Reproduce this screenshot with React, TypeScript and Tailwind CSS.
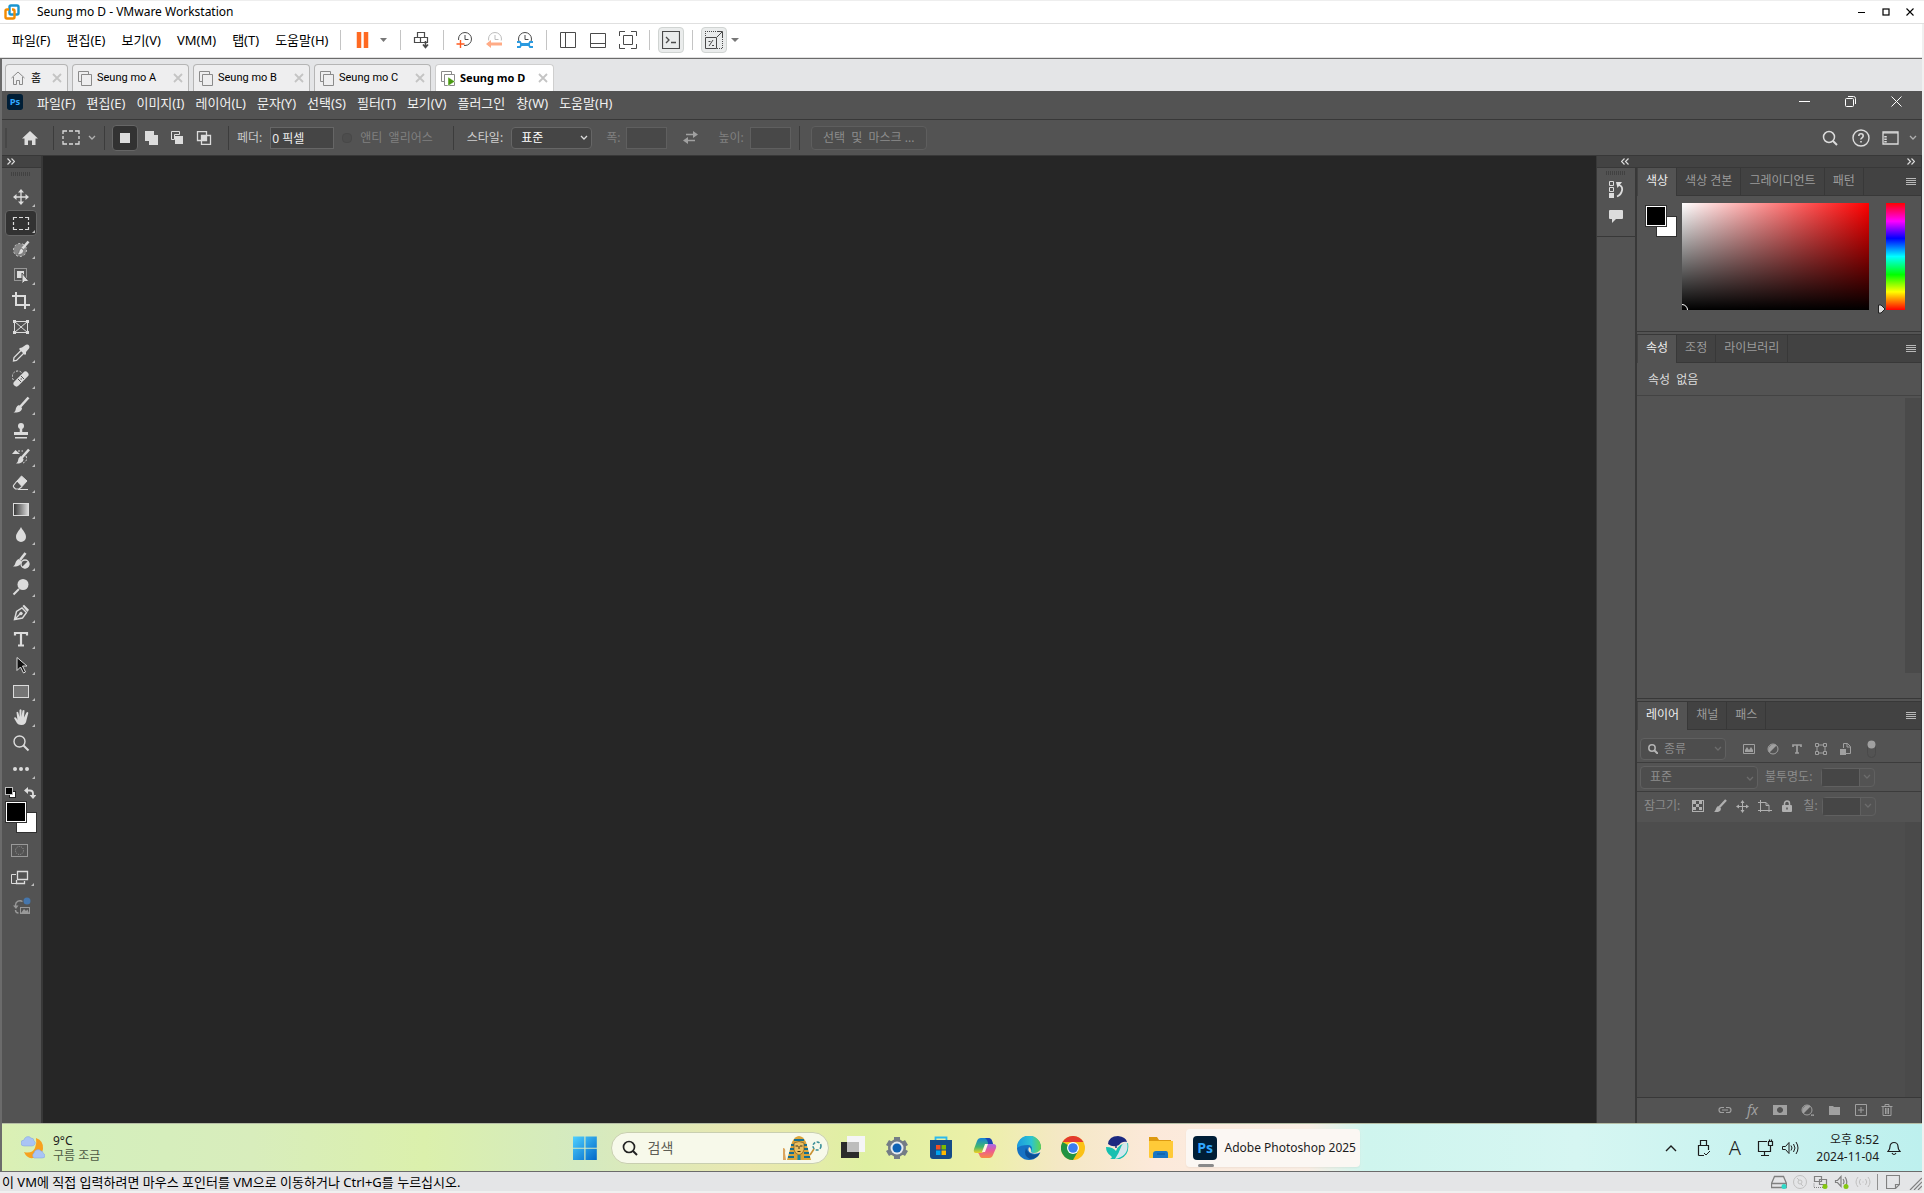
import React, { ReactNode } from 'react';

interface IconProps {
  w?: number;
  h?: number;
  className?: string;
  children: ReactNode;
}

// Stroke based icon, one unit is one pixel
function Icon({ w = 20, h = 20, className = '', children }: IconProps) {
  return (
    <svg
      width={w}
      height={h}
      viewBox={`0 0 ${w} ${h}`}
      fill="none"
      stroke="currentColor"
      aria-hidden="true"
      className={`shrink-0 ${className}`}
    >
      {children}
    </svg>
  );
}

const hostMenus = ['파일(F)', '편집(E)', '보기(V)', 'VM(M)', '탭(T)', '도움말(H)'];

const vmTabs = [
  { name: 'Seung mo A', active: false },
  { name: 'Seung mo B', active: false },
  { name: 'Seung mo C', active: false },
  { name: 'Seung mo D', active: true }
];

const psMenus = [
  '파일(F)', '편집(E)', '이미지(I)', '레이어(L)', '문자(Y)', '선택(S)',
  '필터(T)', '보기(V)', '플러그인', '창(W)', '도움말(H)'
];

function Chevron({ className = '' }: { className?: string }) {
  return (
    <Icon w={8} h={6} className={className}>
      <path d="M1 1l3 3 3-3" strokeWidth="1.3" />
    </Icon>
  );
}

function Divider() {
  return <span className="h-5 w-px shrink-0 bg-[#c4c4c4]" />;
}

function TitleBar() {
  return (
    <header className="flex h-6 items-center border-t border-b border-t-[#eeeeee] border-b-[#e0e0e0] bg-white pr-[10px] pl-1 text-black">
      <Icon w={16} h={16}>
        <rect x="5.5" y="1.5" width="9" height="9" rx="1.5" stroke="#1b95cf" strokeWidth="2.4" />
        <path d="M5 5.5H3Q1.500 5.500 1.500 7v6q0 1.500 1.500 1.500h6q1.500 0 1.500-1.500V7Q10.500 5.500 9 5.500H8" stroke="#f38b00" strokeWidth="2.4" />
      </Icon>
      <h1 className="ml-[17px] flex-1 text-xs leading-4">Seung mo D - VMware Workstation</h1>
      <div className="flex items-center gap-4">
        <button aria-label="최소화">
          <Icon w={8} h={8}><path d="M0 4.500h7" /></Icon>
        </button>
        <button aria-label="최대화">
          <Icon w={8} h={8}><rect x="1" y="1" width="6" height="6" strokeWidth="1.2" /></Icon>
        </button>
        <button aria-label="닫기">
          <Icon w={8} h={8}><path d="M.5.5l7 7M7.500.5l-7 7" strokeWidth="1.1" /></Icon>
        </button>
      </div>
    </header>
  );
}

function Clock({ color, children }: { color: string; children: ReactNode }) {
  return (
    <Icon w={18} h={18}>
      <circle cx="9" cy="8" r="6.500" stroke={color} />
      <path d="M9 4v4.500h3.500" stroke={color} />
      {children}
    </Icon>
  );
}

function HostToolbar() {
  return (
    <div className="flex h-[34px] items-center border-b border-[#e0e0e0] bg-white pb-0.5 pl-3 text-[#4a4a4a]">
      <nav className="flex gap-4 text-[13px] leading-4 text-black">
        {hostMenus.map((m) => (
          <button key={m} className="whitespace-nowrap">{m}</button>
        ))}
      </nav>
      <div className="ml-3 flex items-center">
        <Divider />
        <button aria-label="일시 중지" className="ml-[15px]">
          <Icon w={14} h={18}><path d="M3 1v16M10 1v16" stroke="#ff6a22" strokeWidth="4.500" /></Icon>
        </button>
        <button aria-label="전원 옵션" className="mr-3 ml-2.5">
          <Icon w={8} h={6}><path d="M0 1h7L3.500 5z" fill="#777" stroke="none" /></Icon>
        </button>
        <Divider />
        <button aria-label="Ctrl+Alt+Del" className="mr-3 ml-3">
          <Icon w={18} h={18}>
            <path d="M4.500 1.500h7v5h-7zM1.500 6.500h13v5h-13zM7.500 6.500v5" strokeWidth="1.2" />
            <path d="M12.500 10v6M10 13.500l2.500 3 2.500-3" strokeWidth="1.600" />
          </Icon>
        </button>
        <Divider />
        <div className="mr-3 ml-3 flex gap-3">
          <button aria-label="스냅샷 만들기">
            <Clock color="#4a4a4a">
              <path d="M0 9h8v9H0z" fill="#fff" stroke="none" />
              <path d="M4.500 9v8M.5 13h8" stroke="#ff5a1f" strokeWidth="1.400" />
            </Clock>
          </button>
          <button aria-label="스냅샷 되돌리기">
            <Clock color="#bdbdbd">
              <path d="M0 9.500h18v9H0z" fill="#fff" stroke="none" />
              <path d="M2 13h14" stroke="#ffab86" strokeWidth="3" />
              <path d="M5 9v8L0 13z" fill="#ffab86" stroke="none" />
            </Clock>
          </button>
          <button aria-label="스냅샷 관리">
            <Clock color="#4a4a4a">
              <path d="M0 10.500h18v9H0z" fill="#fff" stroke="none" />
              <path d="M4 13.500h10" stroke="#2a9ae0" strokeWidth="3" />
              <path d="M1 11h3l1.500 2.500L4 16H1M17 11h-3l-1.500 2.500L14 16h3" stroke="#2a9ae0" strokeWidth="1.800" />
            </Clock>
          </button>
        </div>
        <Divider />
        <div className="mr-3 ml-3 flex gap-3">
          <button aria-label="라이브러리">
            <Icon w={18} h={18}><path d="M1.500 1.500h15v15h-15zM6.500 1.500v15" /></Icon>
          </button>
          <button aria-label="축소판 표시줄">
            <Icon w={18} h={18}><path d="M1.500 2.500h15v14h-15zM1.500 12.500h15" /></Icon>
          </button>
          <button aria-label="전체 화면">
            <Icon w={18} h={18}>
              <path d="M.5 5V.5H6M12 .5h5.500V5M17.500 13v4.500H12M6 17.500H.5V13M4.500 4.500h9v9h-9z" />
            </Icon>
          </button>
        </div>
        <Divider />
        <button aria-label="콘솔" className="mx-2 rounded border border-[#d0d4d2] bg-[#eaecec] p-[3px]">
          <Icon w={18} h={18}>
            <path d="M.5.500h17v17H.5z" strokeWidth="1.200" />
            <path d="M4 6l3 3-3 3M9 11.500h5" strokeWidth="1.300" />
          </Icon>
        </button>
        <Divider />
        <button aria-label="늘이기" className="mr-1 ml-2 rounded border border-[#d0d4d2] bg-[#eaecec] p-[3px]">
          <Icon w={18} h={18}>
            <path d="M.5 6.500h11v11H.5zM12 6l5-5M12 .5h5.500V6" />
            <path d="M0 .5h12M17.500 6v12M12 17.500h6M.5 0v6" strokeDasharray="1 1" />
            <path d="M4 15l4-6M3.500 10.500h2M7 14.500h2" />
          </Icon>
        </button>
        <button aria-label="늘이기 옵션">
          <Icon w={8} h={6}><path d="M0 1h8L4 5z" fill="#777" stroke="none" /></Icon>
        </button>
      </div>
    </div>
  );
}

function TabClose() {
  return (
    <button aria-label="탭 닫기" className="text-[#c4c4c4]">
      <Icon w={10} h={10}><path d="M1 1l8 8M9 1L1 9" strokeWidth="1.800" /></Icon>
    </button>
  );
}

function VmTabs() {
  return (
    <div className="flex h-8 items-end gap-1 bg-[#e4e5e7] pl-[3px] text-[11px] leading-4 text-black">
      <div className="flex h-[27px] w-[63px] items-center rounded-t border border-b-0 border-[#b5b5b5] bg-[#eeeeef] px-[5px]">
        <Icon w={14} h={14} className="text-[#8a8a8a]">
          <path d="M.5 7L7 1l6.500 6M2.500 6v7.500h3v-4h3v4h3V6" />
        </Icon>
        <span className="ml-1.5 flex-1">홈</span>
        <TabClose />
      </div>
      {vmTabs.map((tab) => (
        <div
          key={tab.name}
          className={`flex h-[27px] items-center rounded-t border border-b-0 px-[5px] ${
            tab.active
              ? 'w-[119px] border-[#cfcfcf] bg-white font-bold'
              : "w-[117px] border-[#b5b5b5] bg-[#eeeeef] font-['Roboto',sans-serif]"
          }`}
        >
          <Icon w={15} h={15} className="text-[#8a8a8a]">
            <path d="M3 10.500H.5V.5h10V3M3.500 3.500h10v11h-10z" />
            {tab.active && <path d="M7 6v9l7-4.500z" fill="#4a9a12" stroke="#fff" strokeWidth=".5" />}
          </Icon>
          <span className="ml-1 flex-1 whitespace-nowrap">{tab.name}</span>
          <TabClose />
        </div>
      ))}
    </div>
  );
}

function PsLogo({ size }: { size: number }) {
  return (
    <svg width={size} height={size} viewBox="0 0 24 24" aria-hidden="true" className="shrink-0">
      <rect width="24" height="24" rx="4" fill="#001e36" />
      <text x="12" y="17" textAnchor="middle" fontFamily="Open Sans, Noto Sans, sans-serif" fontWeight="700" fontSize="14" fill="#31a8ff">Ps</text>
    </svg>
  );
}

function PsMenuBar() {
  return (
    <div className="flex h-[29px] items-start border-b border-[#383838] bg-[#535353] pt-[3px] pr-5 pl-[5px] text-[#f0f0f0]">
      <PsLogo size={16} />
      <nav className="ml-[14px] flex flex-1 gap-[11px] text-[13px] leading-[18px]">
        {psMenus.map((m) => (
          <button key={m} className="whitespace-nowrap">{m}</button>
        ))}
      </nav>
      <div className="flex gap-[35px] pt-0.5">
        <button aria-label="최소화"><Icon w={11} h={11}><path d="M0 5.500h11" stroke="#fff" /></Icon></button>
        <button aria-label="이전 크기로">
          <Icon w={11} h={11}>
            <rect x=".5" y="2.500" width="8" height="8" rx="1" stroke="#fff" />
            <path d="M3 .5h5.500q2 0 2 2V8" stroke="#fff" />
          </Icon>
        </button>
        <button aria-label="닫기"><Icon w={11} h={11}><path d="M.5.500l10 10M10.500.500l-10 10" stroke="#fff" /></Icon></button>
      </div>
    </div>
  );
}

function BarLine() {
  return <span className="h-6 w-px shrink-0 bg-[#3c3c3c]" />;
}

function OptionsBar() {
  return (
    <div className="flex h-9 items-center border-b border-[#383838] bg-[#535353] pr-[5px] pl-[3px] text-xs leading-4 text-[#dcdcdc]">
      <span className="h-5 w-0.5 bg-[#474747]" />
      <button aria-label="홈" className="mr-[14px] ml-[14px]">
        <Icon w={18} h={16}>
          <path d="M9 1l8 7.500h-2.500V15H11v-4.500H7V15H3.500V8.500H1z" fill="currentColor" stroke="none" />
        </Icon>
      </button>
      <BarLine />
      <button aria-label="도구 사전 설정" className="ml-2 mr-2 flex items-center gap-2">
        <Icon w={18} h={15}>
          <path d="M1 4V1h4M7 1h4M13 1h4v3M17 6v3M17 11v3h-4M11 14H7M5 14H1v-3M1 9V6" strokeWidth="1.300" />
        </Icon>
        <Chevron className="text-[#b0b0b0]" />
      </button>
      <BarLine />
      <div className="mr-3 ml-[7px] flex items-center gap-1.5">
        <button aria-label="새 선택 영역" className="flex h-[26px] w-[26px] items-center justify-center rounded-sm border border-[#666] bg-[#323232]">
          <Icon w={10} h={10}><rect width="10" height="10" fill="currentColor" stroke="none" /></Icon>
        </button>
        <button aria-label="선택 영역에 추가" className="w-5">
          <Icon w={16} h={14}><path d="M1 0h9v4h4v10H5v-4H1z" fill="currentColor" stroke="none" /></Icon>
        </button>
        <button aria-label="선택 영역에서 빼기" className="w-5">
          <Icon w={16} h={14}><path d="M1.500.5h8v3h-5v5h-3z" /><rect x="5" y="5" width="8" height="8" fill="currentColor" stroke="none" /></Icon>
        </button>
        <button aria-label="선택 영역과 교차" className="w-5">
          <Icon w={16} h={14}><path d="M1.500.5h9v9h-9zM5.500 4.500h9v9h-9z" strokeWidth="1.300" /><path d="M6 5h4v4H6z" fill="currentColor" stroke="none" /></Icon>
        </button>
      </div>
      <BarLine />
      <label htmlFor="feather" className="mr-2 ml-2 text-[#c8c8c8]">페더:</label>
      <input id="feather" defaultValue="0 픽셀" className="h-[22px] w-16 border border-[#666] bg-[#454545] pl-[1px] text-[#eee]" />
      <label className="mr-5 ml-2 flex items-center gap-2 whitespace-nowrap text-[#808080]">
        <input type="checkbox" disabled className="h-2.5 w-2.5 appearance-none rounded-sm border border-[#484848] bg-[#4d4d4d]" />
        앤티&nbsp; 앨리어스
      </label>
      <BarLine />
      <label htmlFor="style" className="mr-2 ml-[13px] text-[#d0d0d0]">스타일:</label>
      <div className="relative">
        <select id="style" className="h-[22px] w-[81px] appearance-none rounded-sm border border-[#666] bg-[#454545] pl-[9px] text-white">
          <option>표준</option>
        </select>
        <Chevron className="pointer-events-none absolute top-2 right-1" />
      </div>
      <label htmlFor="width" className="mr-1.5 ml-[14px] text-[#808080]">폭:</label>
      <input id="width" disabled className="h-[22px] w-[41px] border border-[#5f5f5f] bg-[#484848]" />
      <button aria-label="높이와 폭 교체" className="mr-5 ml-4 text-[#a0a0a0]">
        <Icon w={15} h={13}>
          <path d="M3 3.500h8M4 9.500h8" strokeWidth="1.400" />
          <path d="M10 0v7l5-3.500zM5 6v7L0 9.500z" fill="currentColor" stroke="none" />
        </Icon>
      </button>
      <label htmlFor="height" className="mr-1.5 text-[#808080]">높이:</label>
      <input id="height" disabled className="mr-2 h-[22px] w-[41px] border border-[#5f5f5f] bg-[#484848]" />
      <BarLine />
      <button disabled className="ml-[11px] h-6 w-[116px] rounded-sm border border-[#5e5e5e] bg-[#4d4d4d] whitespace-nowrap text-[#8c8c8c]">
        선택&nbsp; 및&nbsp; 마스크 ...
      </button>
      <div className="ml-auto flex items-center">
        <button aria-label="검색">
          <Icon w={16} h={16}><circle cx="7" cy="7" r="5.500" strokeWidth="1.500" /><path d="M11 11l4 4" strokeWidth="2" /></Icon>
        </button>
        <button aria-label="도움말" className="ml-[14px]">
          <Icon w={18} h={18}>
            <circle cx="9" cy="9" r="8" strokeWidth="1.400" />
            <path d="M6.800 7q0-2.200 2.200-2.200T11.200 7Q11.200 8 10 8.800T9 10.500M9 12v1.600" strokeWidth="1.600" />
          </Icon>
        </button>
        <button aria-label="작업 영역" className="ml-3 flex items-center gap-2.5">
          <Icon w={17} h={14}>
            <path d="M1 1h15v12H1z" strokeWidth="1.300" /><path d="M1 2h15" /><path d="M3.500 5v1.500M3.500 7.500V9M3.500 10v1.500" strokeWidth="2.500" />
          </Icon>
          <Chevron className="text-[#b0b0b0]" />
        </button>
      </div>
    </div>
  );
}

interface Tool {
  name: string;
  corner: boolean;
  art: ReactNode;
}

const tools: Tool[] = [
  { name: '이동', corner: true, art: <><path d="M9 2v14M2 9h14" strokeWidth="1.300" /><path d="M9 1l3 3.500H6zM9 17l3-3.500H6zM1 9l3.500-3v6zM17 9l-3.500-3v6z" fill="currentColor" stroke="none" /></> },
  { name: '사각형 선택 윤곽', corner: true, art: <path d="M1.500 6V3.500H5M7 3.500h4M13 3.500h3.500V6M16.500 8v3M16.500 13v2.500H13M11 15.500H7M5 15.500H1.500V13M1.500 11V8" strokeWidth="1.200" /> },
  { name: '선택 브러시', corner: true, art: <><circle cx="8" cy="10" r="6.500" fill="#858585" strokeDasharray="2 2" stroke="#c8c8c8" /><path d="M16.500 1.500l-6 7" strokeWidth="2.600" /><path d="M9.500 8l2 2.500c0 3-3 4.500-6.500 4 2-1 2-3 2.500-4.500z" fill="currentColor" stroke="#535353" strokeWidth=".5" /></> },
  { name: '개체 선택', corner: true, art: <><path d="M2.500 2.500h12v12h-12z" strokeDasharray="1 1" /><path d="M5 5h7v7H5z" fill="currentColor" stroke="none" /><path d="M10 7v11l2.500-2.500H17z" fill="currentColor" stroke="#535353" /></> },
  { name: '자르기', corner: true, art: <path d="M4 0v13h13M0 4h13v13M14 13h4" strokeWidth="2" /> },
  { name: '프레임', corner: false, art: <><path d="M2.500 3.500h13v11h-13zM2.500 3.500l13 11M15.500 3.500l-13 11" /><path d="M1 2h3v3H1zM14 2h3v3h-3zM1 13h3v3H1zM14 13h3v3h-3z" fill="currentColor" stroke="none" /></> },
  { name: '스포이드', corner: true, art: <><path d="M9.500 6L2 13.500 1.500 17l3-.5L12 9" strokeWidth="1.300" /><path d="M8 4l2-.5L14 .8q2-.8 3 .8t0 3L14 8v2l-1 1-6-6z" fill="currentColor" stroke="none" /></> },
  { name: '스팟 복구 브러시', corner: true, art: <><path d="M1.500 10A5 5 0 0 1 10 3" strokeDasharray="2 1.500" /><path d="M4.500 13.500l9-9" strokeWidth="6" strokeLinecap="round" /><path d="M6 9l3 3M9 6l3 3" stroke="#535353" /><path d="M8.500 9h1.500" stroke="#535353" /></> },
  { name: '브러시', corner: true, art: <><path d="M16.500 1.500L8 11" strokeWidth="2.600" /><path d="M7 9l3 3c0 3.500-4 5-8.500 4.500 2-1 2-2.500 2.500-4.500q1-2.500 3-3z" fill="currentColor" stroke="none" /></> },
  { name: '복제 도장', corner: true, art: <><circle cx="9" cy="4" r="3" fill="currentColor" stroke="none" /><path d="M9 5v5" strokeWidth="2.500" /><path d="M2 10h14v3H2zM3 15h12v1.500H3z" fill="currentColor" stroke="none" /></> },
  { name: '작업 내역 브러시', corner: true, art: <><path d="M17 1.500L9.500 10" strokeWidth="2.600" /><path d="M8.500 8l3 3c0 3-3 5-7.500 4.500 2-1 2-3 2.500-5z" fill="currentColor" stroke="none" /><path d="M0 6h8L3.500 2z" fill="currentColor" stroke="none" /><path d="M6 3h5M14 8q2 5-3 7" strokeDasharray="2 1.500" /></> },
  { name: '지우개', corner: true, art: <><path d="M9.500 2L15 7l-5 5.500L5 7z" fill="currentColor" /><path d="M5 7l-3.500 4.500q-.5 1 .5 2l1.500 1.500h3.500L10 12.500M6 15.500h10" strokeWidth="1.200" /></> },
  { name: '그레이디언트', corner: true, art: <><defs><linearGradient id="toolGrad"><stop stopColor="#333" /><stop offset="1" stopColor="#ddd" /></linearGradient></defs><rect x="1.500" y="3.500" width="15" height="12" fill="url(#toolGrad)" /></> },
  { name: '흐림 효과', corner: true, art: <path d="M9 1c2 4 5 6 5 10a5 5 0 0 1-10 0c0-4 3-6 5-10z" fill="currentColor" stroke="none" /> },
  { name: '조정 브러시', corner: true, art: <><path d="M13.500 1L8 8" strokeWidth="2.600" /><path d="M6.500 7l3 2c0 4-4 6-8.500 5.500 2-1 2-3 3-5q1-2 2.500-2.500z" fill="currentColor" stroke="none" /><circle cx="13" cy="12" r="4" fill="#535353" strokeWidth="1.300" /><path d="M10 15l6-6a4 4 0 0 1-6 6z" fill="currentColor" stroke="none" /></> },
  { name: '닷지', corner: true, art: <><circle cx="11" cy="6.500" r="5.500" fill="currentColor" stroke="none" /><path d="M7 11l-5.500 5.500" strokeWidth="2" /></> },
  { name: '펜', corner: true, art: <><path d="M2.500 15.500l2-8L10 4l4.500 4.500-4 5.500zM2.500 15.500l6-6" strokeWidth="1.400" /><circle cx="9" cy="9.500" r="1.300" fill="currentColor" /><path d="M10.500 2L12 .8l5 5L15.500 8z" fill="currentColor" stroke="none" /></> },
  { name: '수평 문자', corner: true, art: <path d="M3 5.500V3h12v2.500M9 3v12M6 15.500h6" strokeWidth="2.200" /> },
  { name: '패스 선택', corner: true, art: <path d="M5 1.500v13l3.500-3.500 3 6 2-1-3-6h4.500z" fill="#111" /> },
  { name: '사각형', corner: true, art: <rect x="1.500" y="3.500" width="15" height="12" fill="#757575" /> },
  { name: '손', corner: true, art: <path d="M2 10q1-1.500 2.500.2L5.500 12 4.500 4.500q.5-1.500 1.800 0L7.500 9V2q1-1.500 2 0v7l1-6.500q1-1.200 2 0L12 9.500l2.500-5q1.500-1 1.800.5L14.500 12q-.5 5-5 5-4 0-5.500-3.500z" fill="currentColor" stroke="none" /> },
  { name: '돋보기', corner: false, art: <><circle cx="7.500" cy="7.500" r="5.500" strokeWidth="1.400" /><path d="M11.500 11.500l5 5" strokeWidth="2" /></> },
  { name: '도구 모음 편집', corner: true, art: <path d="M3 9h.01M9 9h.01M15 9h.01" strokeWidth="4" strokeLinecap="round" /> }
];

function Swatches() {
  return (
    <div className="relative h-[31px] w-[31px] shrink-0">
      <button aria-label="배경색" className="absolute right-0 bottom-0 h-[21px] w-[21px] border border-[#303030] bg-white" />
      <button aria-label="전경색" className="absolute top-0 left-0 h-[20px] w-[20px] border border-white bg-black outline outline-1 outline-[#303030]" />
    </div>
  );
}

function Grip() {
  return (
    <Icon w={20} h={4}><path d="M0 2h20" strokeWidth="4" strokeDasharray="1 1" stroke="#414141" /></Icon>
  );
}

function Toolbar() {
  return (
    <aside className="flex w-[41px] shrink-0 flex-col border-r-2 border-[#383838] bg-[#535353] text-[#dcdcdc]">
      <button aria-label="도구 모음 확장" className="flex h-3 items-center border-b border-[#383838] bg-[#434343] pl-[5px]">
        <Icon w={8} h={7}><path d="M.5.500l3 3-3 3M4.500.500l3 3-3 3" strokeWidth="1.200" /></Icon>
      </button>
      <div className="flex h-4 items-start pt-1 pl-[9px]"><Grip /></div>
      {tools.map((tool, i) => (
        <button
          key={tool.name}
          aria-label={tool.name}
          className={`mx-[3px] flex h-[26px] w-8 items-center justify-between rounded-sm border pl-1.5 ${
            i === 1 ? 'border-[#666] bg-[#323232]' : 'border-transparent'
          }`}
        >
          <Icon w={18} h={18}>{tool.art}</Icon>
          {tool.corner && (
            <Icon w={4} h={4} className="mr-px mb-0.5 self-end">
              <path d="M4 1v3H1z" fill="#bdbdbd" stroke="none" />
            </Icon>
          )}
        </button>
      ))}
      <div className="mt-[3px] flex h-4 items-center justify-between pr-[5px] pl-[3px]">
        <button aria-label="기본 색상">
          <Icon w={12} h={12}>
            <rect x="4.500" y="4.500" width="6" height="6" fill="#fff" stroke="#222" /><rect x=".5" y=".5" width="7" height="7" fill="#000" stroke="#bbb" />
          </Icon>
        </button>
        <button aria-label="색상 교체">
          <Icon w={12} h={12}>
            <path d="M3 3.500h3q3 0 3 3V9" strokeWidth="1.800" /><path d="M4 0v7L0 3.500zM5.500 8h7L9 12z" fill="currentColor" stroke="none" />
          </Icon>
        </button>
      </div>
      <div className="mt-px pl-1"><Swatches /></div>
      <div className="flex flex-col items-start gap-[11px] pt-[10px] pl-[9px]">
        <button aria-label="빠른 마스크" className="text-[#999]">
          <Icon w={18} h={16}><rect x=".5" y="1.500" width="16" height="12" /><circle cx="8.500" cy="7.500" r="4" strokeDasharray="1 1.200" /></Icon>
        </button>
        <button aria-label="화면 모드" className="flex">
          <Icon w={18} h={16}><path d="M5 13.500H.5v-9H5" /><path d="M5.500 10v3.500h8V11M6.500 1.500h10v8h-10z" strokeWidth="1.300" /></Icon>
          <Icon w={4} h={4} className="ml-px self-end"><path d="M4 1v3H1z" fill="#bdbdbd" stroke="none" /></Icon>
        </button>
        <button aria-label="이미지 생성" className="pl-0.5 text-[#999]">
          <Icon w={20} h={20}>
            <path d="M2.500 10V8a4.500 4.500 0 0 1 7-3.500M2.500 13q0 3 3 3" strokeWidth="1.400" /><path d="M0 8.500h5.500L3 12z" fill="currentColor" stroke="none" />
            <rect x="7.500" y="10.500" width="9" height="6" /><path d="M8 16l3-4 2 2 1.500-1.500L16 16z" fill="currentColor" stroke="none" />
            <circle cx="14" cy="4" r="3.500" fill="#4576ad" stroke="none" />
          </Icon>
        </button>
      </div>
    </aside>
  );
}

function PanelTabs({ tabs }: { tabs: string[] }) {
  return (
    <div className="flex h-7 shrink-0 bg-[#424242] pl-px text-xs leading-4">
      {tabs.map((t, i) => (
        <button
          key={t}
          className={`border-r border-[#383838] px-2 pb-0.5 whitespace-nowrap ${
            i === 0 ? 'bg-[#535353] text-[#eeeeee]' : 'border-b text-[#9c9c9c]'
          }`}
        >
          {t}
        </button>
      ))}
      <div className="flex flex-1 items-center justify-end border-b border-[#383838] pr-[5px]">
        <button aria-label="패널 메뉴" className="text-[#b8b8b8]">
          <Icon w={10} h={8}><path d="M0 .5h10M0 2.500h10M0 4.500h10M0 6.500h10" /></Icon>
        </button>
      </div>
    </div>
  );
}

function ColorPanel() {
  return (
    <section className="border-b border-[#383838]">
      <PanelTabs tabs={['색상', '색상 견본', '그레이디언트', '패턴']} />
      <div className="flex h-[135px] pt-[7px] pr-4">
        <div className="mr-[5px] ml-[9px] pt-[3px]"><Swatches /></div>
        <div className="relative h-[107px] flex-1 overflow-hidden bg-[linear-gradient(to_right,#fff,#f00)]">
          <div className="absolute inset-0 bg-[linear-gradient(to_bottom,transparent,#000)]" />
          <span className="absolute -bottom-1.5 -left-1.5 h-3 w-3 rounded-full border border-white" />
        </div>
        <div className="flex items-end pb-[17px] pl-2">
          <Icon w={9} h={10}><path d="M1.500 1H4l4 4-4 4H1.500z" fill="#ddd" stroke="#222" /></Icon>
        </div>
        <div className="h-[107px] w-[19px] bg-[linear-gradient(to_bottom,#f00,#f0f_17%,#00f_33%,#0ff_50%,#0f0_67%,#ff0_83%,#f00)]" />
      </div>
    </section>
  );
}

function PropertiesPanel() {
  return (
    <section className="mt-[2px] border-t border-b border-[#383838]">
      <PanelTabs tabs={['속성', '조정', '라이브러리']} />
      <p className="h-[33px] border-b border-[#434343] pt-[9px] pl-[11px] text-xs leading-4 text-[#dcdcdc]">속성&nbsp; 없음</p>
      <div className="flex h-[302px] justify-end pt-0.5 pb-[25px]">
        <div className="w-4 bg-[#4a4a4a]" />
      </div>
    </section>
  );
}

function NumberBox({ id }: { id: string }) {
  return (
    <div className="flex h-[19px] rounded-sm border border-[#606060] text-[#6c6c6c]">
      <input id={id} disabled className="w-[38px] border-r border-[#606060] bg-[#464646]" />
      <button aria-label="값 선택" disabled className="px-[3px]"><Chevron /></button>
    </div>
  );
}

function LayersPanel() {
  return (
    <section className="mt-[2px] flex flex-1 flex-col border-t border-[#383838] text-xs leading-4 text-[#8c8c8c]">
      <PanelTabs tabs={['레이어', '채널', '패스']} />
      <div className="flex h-[33px] items-center border-b border-[#3c3c3c] pt-1.5 pl-[3px]">
        <div className="relative">
          <Icon w={10} h={10} className="absolute top-1.5 left-2 text-[#b4b4b4]"><circle cx="4" cy="4" r="3.200" strokeWidth="1.500" /><path d="M6.500 6.500L10 10" strokeWidth="2" /></Icon>
          <select aria-label="필터 종류" disabled className="h-[22px] w-[86px] appearance-none rounded-sm border border-[#606060] bg-[#4d4d4d] pl-[23px]">
            <option>종류</option>
          </select>
          <Chevron className="absolute top-2 right-1 text-[#6c6c6c]" />
        </div>
        <div className="ml-[17px] flex items-center gap-3 text-[#a0a0a0]">
          <button aria-label="픽셀"><Icon w={12} h={12}><path d="M.5 1.500h11v9H.5z" /><path d="M2 9V7l2-3 2 3 2-3 2 3v2z" fill="currentColor" stroke="none" /></Icon></button>
          <button aria-label="조정"><Icon w={12} h={12}><circle cx="6" cy="6" r="5" /><path d="M2.500 9.500l7-7A5 5 0 0 0 2.500 9.500z" fill="currentColor" stroke="none" /></Icon></button>
          <button aria-label="문자"><Icon w={12} h={12}><path d="M2 4V2h8v2M6 2v8M4 10h4" strokeWidth="1.700" /></Icon></button>
          <button aria-label="모양"><Icon w={12} h={12}><path d="M2 2h8v8H2z" /><path d="M.5.500h3v3h-3zM8.500.500h3v3h-3zM.5 8.500h3v3h-3zM8.500 8.500h3v3h-3z" fill="#535353" /></Icon></button>
          <button aria-label="고급 개체"><Icon w={12} h={12}><path d="M4.500 5V.5h4l3 3v7H7M8 .5v3.500h3" /><path d="M1 6h6v6H1z" fill="currentColor" stroke="none" /></Icon></button>
          <button aria-label="필터 켜기" className="ml-1"><Icon w={9} h={18}><rect x=".5" y=".5" width="8" height="17" rx="4" stroke="#4a4a4a" /><circle cx="4.500" cy="4.500" r="4" fill="currentColor" stroke="none" /></Icon></button>
        </div>
      </div>
      <div className="flex h-[29px] items-center border-b border-[#3c3c3c] pl-[3px]">
        <div className="relative mr-[7px]">
          <select aria-label="혼합 모드" disabled className="h-[23px] w-[118px] appearance-none rounded-sm border border-[#606060] bg-[#4d4d4d] pl-[9px]">
            <option>표준</option>
          </select>
          <Chevron className="absolute top-2.5 right-1 text-[#6c6c6c]" />
        </div>
        <label htmlFor="opacity" className="mr-[9px]">불투명도:</label>
        <NumberBox id="opacity" />
      </div>
      <div className="flex h-[30px] items-center pb-0.5 pl-[7px]">
        <span className="mr-3">잠그기:</span>
        <div className="mr-2.5 flex items-center gap-[9px] text-[#b0b0b0]">
          <button aria-label="투명 픽셀 잠그기"><Icon w={12} h={12}><rect x=".5" y=".5" width="11" height="11" /><path d="M1 1h3v3H1zM7 1h3v3H7zM4 4h3v3H4zM1 7h3v3H1zM7 7h3v3H7z" fill="currentColor" stroke="none" /></Icon></button>
          <button aria-label="이미지 픽셀 잠그기"><Icon w={14} h={14}><path d="M13 1L6 8.500" strokeWidth="2.300" /><path d="M5 7l3 2.500c0 3-3 4-7 3.500 2-1 1.500-4.500 4-6z" fill="currentColor" stroke="none" /></Icon></button>
          <button aria-label="위치 잠그기"><Icon w={13} h={13}><path d="M6.500 1v11M1 6.500h11" /><path d="M6.500 0l2 3h-4zM6.500 13l2-3h-4zM0 6.500l3-2v4zM13 6.500l-3-2v4z" fill="currentColor" stroke="none" /></Icon></button>
          <button aria-label="자동 중첩 방지"><Icon w={14} h={12}><path d="M2.500 0v12M0 2.500h8l3 3V12M0 10.500h14M8 2.500v3h3" /></Icon></button>
          <button aria-label="모두 잠그기"><Icon w={12} h={12}><rect x="1" y="5" width="10" height="7" rx="1" fill="currentColor" stroke="none" /><path d="M3.500 5V3.500a2.500 2.500 0 0 1 5 0V5" strokeWidth="1.500" /><path d="M6 7.500v2" stroke="#535353" strokeWidth="1.500" /></Icon></button>
        </div>
        <label htmlFor="fill" className="mr-1">칠:</label>
        <NumberBox id="fill" />
      </div>
      <div className="flex flex-1 justify-end border-b border-[#383838] bg-[#4d4d4d]">
        <div className="w-4 bg-[#4a4a4a]" />
      </div>
      <div className="flex h-[25px] items-center justify-end gap-[14px] pr-7 pb-px text-[#a0a0a0]">
        <button aria-label="레이어 연결"><Icon w={14} h={12}><path d="M6 3.500H3.500a2.500 2.500 0 0 0 0 5H6M8 3.500h2.500a2.500 2.500 0 0 1 0 5H8M4 6h6" strokeWidth="1.200" /></Icon></button>
        <button aria-label="레이어 스타일" className="w-[13px] text-sm italic">fx</button>
        <button aria-label="레이어 마스크"><Icon w={14} h={12}><path d="M0 1h14v10H0zM7 3a3 3 0 1 0 .01 0z" fill="currentColor" fillRule="evenodd" stroke="none" /></Icon></button>
        <button aria-label="칠 또는 조정 레이어"><Icon w={13} h={12}><circle cx="6" cy="6" r="5" /><path d="M2.500 9.500l7-7A5 5 0 0 0 2.500 9.500z" fill="currentColor" stroke="none" /><path d="M10 11h3l-1.500 1z" /></Icon></button>
        <button aria-label="새 그룹"><Icon w={13} h={12}><path d="M1 2h4l1 1h6v8H1z" fill="currentColor" stroke="none" /></Icon></button>
        <button aria-label="새 레이어"><Icon w={12} h={12}><path d="M.5.500h11v11H.5zM6 3v6M3 6h6" /></Icon></button>
        <button aria-label="레이어 삭제"><Icon w={12} h={12}><path d="M.5 2.500h11M4 2V.5h4V2M2 3v8.500h8V3M4.500 4v6M7.500 4v6M6 4v6" /></Icon></button>
      </div>
    </section>
  );
}

function Photoshop() {
  return (
    <main className="flex flex-1 flex-col">
      <PsMenuBar />
      <OptionsBar />
      <div className="flex flex-1 bg-[#262626]">
        <Toolbar />
        <div className="flex-1" />
        <div className="flex flex-col border-x border-[#383838] bg-[#383838]">
          <div className="flex h-3 items-center justify-between border-b border-[#383838] bg-[#434343] px-[6px] text-[#dcdcdc]">
            <button aria-label="패널 확장" className="ml-[18px]"><Icon w={8} h={7}><path d="M3.500.500l-3 3 3 3M7.500.500l-3 3 3 3" strokeWidth="1.200" /></Icon></button>
            <button aria-label="패널 축소"><Icon w={8} h={7}><path d="M.5.500l3 3-3 3M4.500.500l3 3-3 3" strokeWidth="1.200" /></Icon></button>
          </div>
          <div className="flex flex-1 gap-0.5">
            <aside className="w-[38px] bg-[#535353] text-[#dcdcdc]">
              <div className="flex h-[69px] flex-col items-center border-b border-[#383838] pt-[3px]">
                <Grip />
                <button aria-label="작업 내역" className="mt-1.5 mb-3">
                  <Icon w={16} h={17}>
                    <path d="M1.500.500h4v4h-4zM1.500 6.500h4v4h-4z" /><path d="M1 12h5v5H1z" fill="currentColor" stroke="none" />
                    <path d="M10 3.500q5 1.500 4 6t-5 6" strokeWidth="1.800" /><path d="M8 1h6L9.500 7z" fill="currentColor" stroke="none" />
                  </Icon>
                </button>
                <button aria-label="주석"><Icon w={14} h={13}><path d="M1 0h12q1 0 1 1v7q0 1-1 1H7l-4 4V9H1Q0 9 0 8V1q0-1 1-1z" fill="currentColor" stroke="none" /></Icon></button>
              </div>
            </aside>
            <div className="flex w-[284px] flex-col bg-[#535353]">
              <ColorPanel />
              <PropertiesPanel />
              <LayersPanel />
            </div>
          </div>
        </div>
      </div>
    </main>
  );
}

const taskbarApps: { name: string; art: ReactNode }[] = [
  {
    name: '작업 보기',
    art: <><rect x="0" y="6" width="18" height="16" fill="#2b2b2b" /><rect x="6" y="0" width="18" height="16" fill="#f5f5f7" /><rect x="6" y="6" width="12" height="10" fill="#bdbdbd" /></>
  },
  {
    name: '설정',
    art: <><circle cx="12" cy="12" r="9" fill="#737c86" /><path d="M12 1v22M2.500 6.500l19 11M2.500 17.500l19-11" stroke="#737c86" strokeWidth="6" /><circle cx="12" cy="12" r="6.500" fill="#e5e9ee" /><circle cx="12" cy="12" r="4.500" fill="#0e62b5" /></>
  },
  {
    name: 'Microsoft Store',
    art: <><path d="M6.500 5V1.500h11V5" stroke="#2bb9ed" strokeWidth="1.800" /><path d="M1 4h22v16q0 3-3 3H4q-3 0-3-3z" fill="#154c88" /><path d="M7 9h4.500v4.500H7z" fill="#f25022" /><path d="M12.500 9H17v4.500h-4.500z" fill="#7fba00" /><path d="M7 14.500h4.500V19H7z" fill="#00a4ef" /><path d="M12.500 14.500H17V19h-4.500z" fill="#ffb900" /></>
  },
  {
    name: 'Copilot',
    art: <><defs><linearGradient id="cpA" x2="0" y2="1"><stop stopColor="#1583d8" /><stop offset=".6" stopColor="#42b86b" /><stop offset="1" stopColor="#f4cf22" /></linearGradient><linearGradient id="cpB" x2="0" y2="1"><stop stopColor="#a56be8" /><stop offset=".5" stopColor="#ec5b92" /><stop offset="1" stopColor="#f88a42" /></linearGradient></defs><path d="M8 2h7q3 0 4 4l1 2h-5q-2 0-3 4l-1 3q-1 2-3 2H3q-3 0-2-4l3-8q1-3 4-3z" fill="url(#cpA)" /><path d="M16 22H9q-2 0-3-4l-1-1h3q3 0 4-4l2-5h6q4 0 3 4l-3 7q-1 3-4 3z" fill="url(#cpB)" /><path d="M14 2h2q3 0 4 6h-5q0-4-3-6z" fill="#1b45b4" /><path d="M12 8h3l-3 8H9z" fill="#fff6df" /></>
  },
  {
    name: 'Microsoft Edge',
    art: <><defs><linearGradient id="edA"><stop stopColor="#1a9be0" /><stop offset=".6" stopColor="#2cc3d2" /><stop offset="1" stopColor="#64d64a" /></linearGradient></defs><circle cx="12" cy="12" r="12" fill="#1672c4" /><path d="M0 12A12 12 0 0 1 24 11q0 6-6 6-4 0-4-2c2-2 1-6-3-6q-8 0-11 3z" fill="url(#edA)" /><path d="M9 12q-3 8 4 11 7 0 10-6-5 3-9 1-4-2-5-6z" fill="#0c4f96" /><path d="M12 11q-2 4 2 6 5 2 10-1v-3q-3 4-7 4t-3-3q0-2-2-3z" fill="#f6e9c8" /></>
  },
  {
    name: 'Chrome',
    art: <><circle cx="12" cy="12" r="12" fill="#fbc116" /><path d="M1.600 6A12 12 0 0 0 12 24l5.200-9L12 12z" fill="#229342" /><path d="M1.600 6A12 12 0 0 1 22.400 6H12z" fill="#e33b2e" /><circle cx="12" cy="12" r="6" fill="#fff" /><circle cx="12" cy="12" r="4.800" fill="#3a7dee" /></>
  },
  {
    name: 'Whale',
    art: <><path d="M1 11q7 0 10 4 3-8 12-8 2 12-8 16H5q3-1 1-3-5-3-5-9z" fill="#16c0b0" /><path d="M22 6q3 14-12 17 4-6 6-12 2-5 6-5z" fill="#d4e7ec" /><path d="M3 8Q4 0 13 0q8 1 9 6-5-1-8 3-6 3-11-1z" fill="#1b2880" /><circle cx="11" cy="11" r="1" fill="#1b2880" /></>
  },
  {
    name: '파일 탐색기',
    art: <><path d="M0 1h8l2 3h12v6H0z" fill="#dd9a12" /><path d="M0 5h24v16q0 1-1 1H1q-1 0-1-1z" fill="#ffca38" /><path d="M4 22v-4q0-3 3-3h10q2 0 2 3v4z" fill="#1976c4" /><path d="M8 18h8" stroke="#0c579c" /></>
  }
];

function Taskbar() {
  return (
    <footer className="grid h-[49px] grid-cols-[1fr_auto_1fr] items-center border-t border-b border-t-[#b5bda5] border-b-[#6b6b6b] bg-[linear-gradient(to_right,#dbf0b4,#d4efbc_4%,#d8edbc_13%,#dbf0ac_22%,#d4eac0_30%,#eae8b0_39%,#dff0a2_45%,#ecf0a8_51%,#f4e8c4_55%,#fce9da_60%,#faeee4_68%,#cff5ee_71%,#d6f6f2_82%,#bdf0ee)]">
      <button className="flex items-center gap-2 pl-[19px] text-left text-xs leading-[15px]">
        <Icon w={24} h={24}>
          <path d="M15 2q8 3 7 11t-10 9q-6 1-9-6 8 2 11-4 2-5 1-10z" fill="#f7a11e" stroke="none" />
          <path d="M3 10a3 3 0 0 1 0-6 4 4 0 0 1 7-2q3 0 3 3 2 1 1 3t-3 2zM13 22a3 3 0 0 1 0-5 4 4 0 0 1 7-2q2 0 2 2 2 1 2 3t-3 2z" fill="#a9c4f5" stroke="#7fa3e3" strokeWidth=".5" />
        </Icon>
        <span className="text-[#1c1c1c]">9°C<br /><span className="text-[#4d5943]">구름 조금</span></span>
      </button>
      <div className="flex items-center pl-2">
        <button aria-label="시작" className="mr-[14px]">
          <Icon w={24} h={24}>
            <defs><linearGradient id="win" x2="1" y2="1"><stop stopColor="#4fd0ff" /><stop offset="1" stopColor="#0067c8" /></linearGradient></defs>
            <path d="M0 .500h11.300v11.300H0zM12.500.500H23.800v11.300H12.500zM0 12.800h11.300v11.300H0zM12.500 12.800h11.300v11.300H12.500z" fill="url(#win)" stroke="none" />
          </Icon>
        </button>
        <label className="mr-3 flex h-8 w-[218px] items-center rounded-full border border-[#c9cfb0] bg-[#f7f9ea] pr-1.5 pl-2.5 text-[#222]">
          <Icon w={16} h={16}><circle cx="7" cy="7" r="5.500" strokeWidth="1.700" /><path d="M11 11l4 4" strokeWidth="2" /></Icon>
          <input type="search" aria-label="검색" placeholder="검색" className="ml-2.5 w-full min-w-0 bg-transparent text-sm leading-5 placeholder:text-[#5d5d55]" />
          <Icon w={40} h={26}>
            <path d="M5 25L10 7q3-6 7-6t7 6l5 18z" fill="#d9a43a" stroke="none" />
            <path d="M12 5h10M9 10h3M22 10h3M8 14h4M22 14h4M7 18h5M22 18h5M6 22h6M22 22h6" stroke="#166f91" strokeWidth="2" />
            <path d="M12 8q5-3 10 0v7q-1 4-5 5-4-1-5-5z" fill="#e9bf62" stroke="#7b5a1e" strokeWidth=".7" />
            <path d="M13.500 11h2.500M18 11h2.500M15.500 16.500h3M17 11v3" stroke="#3c3115" />
            <path d="M15.500 20h3v5h-3z" fill="#1c86a0" stroke="none" />
            <path d="M1 13q3 0 2 5l1 7H1z" fill="#dba55f" stroke="none" />
            <circle cx="35" cy="11" r="4" stroke="#3a8f98" strokeWidth="1.600" strokeDasharray="3 1.500" /><path d="M32 14l-4 6" stroke="#c99233" strokeWidth="1.600" />
          </Icon>
        </label>
        <div className="flex items-center gap-5">
          {taskbarApps.map((app) => (
            <button key={app.name} aria-label={app.name}>
              <svg width="24" height="24" viewBox="0 0 24 24" fill="none" aria-hidden="true">{app.art}</svg>
            </button>
          ))}
        </div>
        <button className="relative ml-[13px] flex h-[38px] w-[174px] items-center gap-2 rounded bg-[#fbf7f3] pl-[7px] text-xs leading-4 whitespace-nowrap text-[#1c1c1c] shadow-xs">
          <PsLogo size={24} />
          Adobe Photoshop 2025
          <span className="absolute bottom-0 left-3 h-[3px] w-4 rounded-full bg-[#8a8a8a]" />
        </button>
      </div>
      <div className="flex items-center justify-end pr-[21px] text-[#1c1c1c]">
        <button aria-label="숨겨진 아이콘 표시" className="mr-5"><Icon w={12} h={12}><path d="M1 9l5-5 5 5" strokeWidth="1.400" /></Icon></button>
        <button aria-label="USB" className="mr-[18px]"><Icon w={14} h={18}><path d="M3.500 6V1.500h6V6M1.500 16.500V6.500h10V11M1.500 16.500H7M5 3.500h.01M8 3.500h.01" strokeWidth="1.200" /><path d="M7 14l2 2 4-4" /></Icon></button>
        <button className="mr-4 text-xl leading-5 font-light">A</button>
        <button aria-label="네트워크" className="mr-2"><Icon w={17} h={18}><path d="M10 2.500H1.500v10h12V9M4 16.500h8M7.500 12.500v4M11.500 2.500h4v4h-4zM13.500 6.500v6M12.500.500v2M14.500.500v2" strokeWidth="1.200" /></Icon></button>
        <button aria-label="볼륨" className="mr-1"><Icon w={17} h={14}><path d="M.5 5.500h3l3.500-4v11l-3.500-4h-3zM9 4.500q2 2.500 0 5M11.500 3q3 4 0 8M14 1q4 6 0 12" /></Icon></button>
        <button className="mr-2 w-[76px] text-right text-xs leading-[17px] whitespace-nowrap">오후 8:52<br />2024-11-04</button>
        <button aria-label="알림"><Icon w={14} h={16}><path d="M1 11.500q2-2 2-5a4 4 0 0 1 8 0q0 3 2 5zM5 13q2 3 4 0" strokeWidth="1.200" /></Icon></button>
      </div>
    </footer>
  );
}

function StatusBar() {
  return (
    <div className="flex h-[21px] items-center border-b-2 border-[#f0f0f0] bg-[#e4e5e7] pl-[2px] text-[13px] leading-4 text-black">
      <p className="flex-1 whitespace-nowrap">이 VM에 직접 입력하려면 마우스 포인터를 VM으로 이동하거나 Ctrl+G를 누르십시오.</p>
      <div className="flex items-center gap-1.5 text-[#808080]">
        <Icon w={16} h={14}><path d="M3.500 1.500h9l3 7v4H.5v-4zM.5 8.500h15" strokeWidth="1.300" /><circle cx="13" cy="11.500" r="2.500" fill="#2fd9c8" stroke="none" /></Icon>
        <Icon w={14} h={14} className="text-[#c0c0c0]"><circle cx="7" cy="7" r="6.500" /><circle cx="7" cy="7" r="2" /><path d="M4 3l2 2M8 9l2 2" /></Icon>
        <Icon w={15} h={14}><path d="M1.500 1.500h7v5h-7zM6.500 4.500h7v5h-7z" strokeWidth="1.200" /><path d="M1 8.500v4h9" strokeDasharray="1 1" /><circle cx="12" cy="11.500" r="2.500" fill="#84c711" stroke="none" /></Icon>
        <Icon w={15} h={14}><path d="M1.500 5.500h2l3.500-4v10l-3.500-4h-2zM9 4q2 3 0 5M11 2q3 4 1 8" strokeWidth="1.200" /><circle cx="12" cy="11.500" r="2.500" fill="#84c711" stroke="none" /></Icon>
        <Icon w={16} h={14} className="text-[#c0c0c0]"><path d="M3 2q-4 5 0 10M5.500 4q-2.500 3 0 6M13 2q4 5 0 10M10.500 4q2.500 3 0 6M7.500 7h1" /></Icon>
        <span className="mr-0.5 h-4 w-px bg-[#909090]" />
        <button aria-label="메시지 로그"><Icon w={14} h={14}><path d="M.5.500h13v9l-4 4h-9zM13.500 9.500h-4v4" strokeWidth="1.200" /></Icon></button>
        <Icon w={16} h={16}><path d="M4 16L16 4M8 16l8-8M12 16l4-4" strokeWidth="1.200" /></Icon>
      </div>
    </div>
  );
}

export default function App() {
  return (
    <div className="flex min-h-screen flex-col bg-[#f0f0f0] font-['Noto_Sans','Noto_Sans_CJK_KR',sans-serif]">
      <TitleBar />
      <div className="flex flex-1 flex-col pr-0.5">
        <HostToolbar />
        <div className="flex flex-1 flex-col border-t border-l-2 border-[#6b6b6b]">
          <VmTabs />
          <Photoshop />
          <Taskbar />
        </div>
        <StatusBar />
      </div>
    </div>
  );
}
